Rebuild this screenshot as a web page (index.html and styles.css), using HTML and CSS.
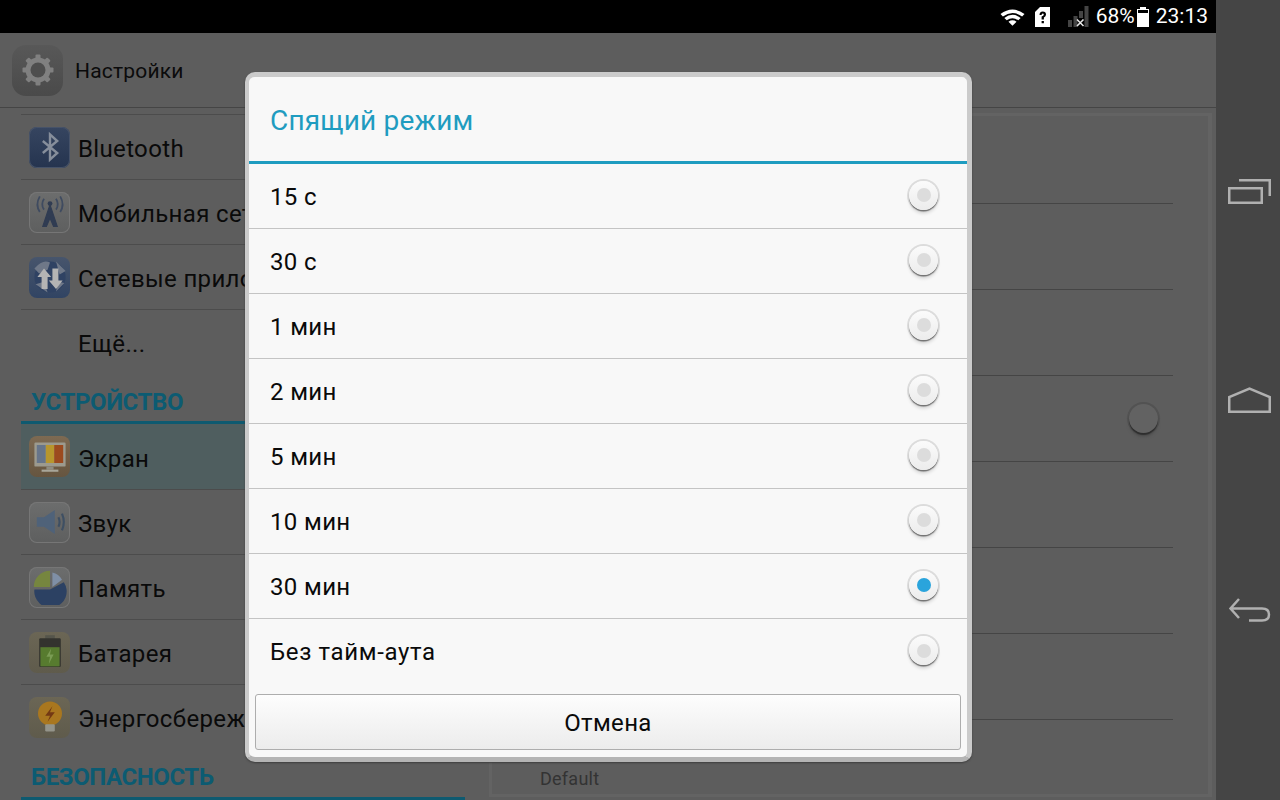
FILE: index.html
```html
<!DOCTYPE html>
<html lang="ru">
<head>
<meta charset="utf-8">
<title>Настройки</title>
<link rel="stylesheet" href="styles.css">
</head>
<body>
<div class="screen">
  <div class="app">
    <header class="status">
      <svg class="st-wifi" width="25" height="18" viewBox="0 0 26 18"><path d="M0.500 6 Q13 -3.500 25.500 6 L23 8.500 Q13 1 3 8.500Z M4.500 10 Q13 3.500 21.500 10 L19 12.500 Q13 8 7 12.500Z M8.800 14 Q13 11 17.200 14 L13 18Z" fill="#fff"/></svg>
      <svg class="st-sim" width="15" height="20" viewBox="0 0 15 20"><path d="M0 5 L5 0 H15 V20 H0Z" fill="#fff"/><path d="M4.500 8 Q4.500 4.500 7.700 4.500 Q11 4.500 11 7.500 Q11 9.500 8.900 10.500 V12.500 H6.600 V9.500 Q8.800 8.800 8.800 7.500 Q8.800 6.500 7.700 6.500 Q6.600 6.500 6.600 8Z M6.600 14 H8.900 V16.300 H6.600Z" fill="#000"/></svg>
      <svg class="st-sig" width="21" height="21" viewBox="0 0 21 21"><path d="M0 14 H4 V21 H0Z M5.500 10 H9.500 V21 H5.500Z M11 5 H15 V12 H11Z M16.500 0 H20.500 V21 H16.500Z" fill="#444"/><path d="M9 13.500 L15.500 20 M15.500 13.500 L9 20" stroke="#e8e8e8" stroke-width="1.600"/></svg>
      <span class="st-text">68%</span>
      <svg class="st-bat" width="12" height="20" viewBox="0 0 12 20"><path d="M3 0 H9 V2 H12 V20 H0 V2 H3Z" fill="#fff"/><path d="M1 3 H11 V6 H1Z" fill="#000"/></svg>
      <span class="st-text">23:13</span>
    </header>
    <div class="actionbar">
      <div class="app-icon">
        <svg width="34" height="34" viewBox="0 0 34 34"><g fill="#808080"><circle cx="17" cy="17" r="12.500"/><rect x="14.500" y="1.500" width="5" height="31" rx="1"/><rect x="14.500" y="1.500" width="5" height="31" rx="1" transform="rotate(45 17 17)"/><rect x="14.500" y="1.500" width="5" height="31" rx="1" transform="rotate(90 17 17)"/><rect x="14.500" y="1.500" width="5" height="31" rx="1" transform="rotate(135 17 17)"/></g><circle cx="17" cy="17" r="7.500" fill="#4e4e4e"/></svg>
      </div>
      <span class="app-title">Настройки</span>
    </div>
    <div class="content">
      <nav class="list">
        <div class="row">
          <span class="ico ico-blue"><svg viewBox="0 0 30 30"><path d="M9 10 L21 20 L15 25.500 V4.500 L21 10 L9 20" fill="none" stroke="#868e9b" stroke-width="2"/></svg></span>
          <span class="label">Bluetooth</span>
        </div>
        <div class="row">
          <span class="ico ico-grey"><svg viewBox="0 0 30 30"><path d="M15 9 L9 27 H12 L15 20 L18 27 H21Z M12 20 H18 M13 15 H17" fill="#303c52" stroke="#303c52" stroke-width="1"/><circle cx="15" cy="8" r="2" fill="#303c52"/><path d="M10 4 Q7 9 10 13 M6.500 2 Q2.500 9 6.500 15 M20 4 Q23 9 20 13 M23.500 2 Q27.500 9 23.500 15" fill="none" stroke="#3f4b60" stroke-width="1.500"/></svg></span>
          <span class="label">Мобильная сеть</span>
        </div>
        <div class="row">
          <span class="ico ico-globe"><svg viewBox="0 0 30 30"><circle cx="15" cy="15" r="13" fill="#2f4263"/><path d="M2 8 Q9 0 15 3 L13 9 L6 12Z M20 2 L28 10 L23 13Z M3 21 L10 19 L13 28Z M22 19 L27 20 L20 27Z" fill="#6f7888"/><path d="M10 8 L16 15 H13 V25 H8 V15 H4.500Z M20 25 L14 18 H17 V8 H22 V18 H25.500Z" fill="#b4b4b4"/></svg></span>
          <span class="label">Сетевые приложения</span>
        </div>
        <div class="row">
          <span class="ico ico-none"></span>
          <span class="label">Ещё...</span>
        </div>
        <div class="section">УСТРОЙСТВО</div>
        <div class="row active">
          <span class="ico ico-tan"><svg viewBox="0 0 30 30"><rect x="2" y="3" width="26" height="20" rx="1" fill="#9c9a8e"/><rect x="4" y="5" width="7.500" height="15" fill="#67758a"/><rect x="11.500" y="5" width="7" height="15" fill="#b8962d"/><rect x="18.500" y="5" width="7.500" height="15" fill="#9c4a1e"/><rect x="12" y="23" width="6" height="2.500" fill="#8f8c80"/><rect x="8" y="25.500" width="14" height="1.800" fill="#a8a69a"/></svg></span>
          <span class="label">Экран</span>
        </div>
        <div class="row">
          <span class="ico ico-grey"><svg viewBox="0 0 30 30"><path d="M4 11 H10 L19 5 V25 L10 19 H4Z" fill="#4f6279"/><path d="M22 11 Q24 15 22 19 M25 8 Q28 15 25 22" fill="none" stroke="#3e4f63" stroke-width="1.800"/></svg></span>
          <span class="label">Звук</span>
        </div>
        <div class="row">
          <span class="ico ico-grey"><svg viewBox="0 0 30 30"><path d="M15 15 L15 1.500 A13.500 13.500 0 0 0 1.500 15Z" fill="#76863f"/><path d="M17 3 A12 12 0 0 1 25 9 L17 15Z" fill="#7f8fa6"/><path d="M26.500 11 A13.500 13.500 0 1 1 2 17 H15 Z" fill="#2c4163"/></svg></span>
          <span class="label">Память</span>
        </div>
        <div class="row">
          <span class="ico ico-olive"><svg viewBox="0 0 30 30"><rect x="11" y="1" width="8" height="3" fill="#55554b"/><rect x="6" y="3.500" width="18" height="24" rx="1" fill="#33332e"/><rect x="7" y="11" width="16" height="16" fill="#577b2f"/><path d="M16 12 L12 19 H15 L14 25 L18 17 H15Z" fill="#7a9c54"/></svg></span>
          <span class="label">Батарея</span>
        </div>
        <div class="row">
          <span class="ico ico-olive"><svg viewBox="0 0 30 30"><circle cx="15" cy="12" r="10" fill="#a9771f"/><rect x="11" y="21" width="8" height="6" rx="1" fill="#94948a"/><path d="M17 6 L11 14 H15 L13 19 L19 11 H15Z" fill="#733914"/></svg></span>
          <span class="label">Энергосбережение</span>
        </div>
        <div class="section section-last">БЕЗОПАСНОСТЬ</div>
      </nav>
      <section class="pane">
        <div class="pane-row"></div>
        <div class="pane-row"></div>
        <div class="pane-row"></div>
        <div class="pane-row"><span class="pane-radio"></span></div>
        <div class="pane-row"></div>
        <div class="pane-row"></div>
        <div class="pane-row"></div>
        <div class="pane-foot">Default</div>
      </section>
    </div>
  </div>
  <aside class="navbar">
    <svg width="46" height="26" viewBox="0 0 46 26"><path d="M14 2.250 H44.750 V18 M4.250 10.250 H36.750 V24.750 H4.250Z" fill="none" stroke="#b0b0b0" stroke-width="2.500"/></svg>
    <svg width="46" height="28" viewBox="0 0 46 28"><path d="M4.250 25.750 V11 L24.500 2.500 L44.750 11 V25.750Z" fill="none" stroke="#b0b0b0" stroke-width="2.500"/></svg>
    <svg width="46" height="28" viewBox="0 0 46 28"><path d="M14 3 L5.500 12.500 L14 22 M5.500 12.500 H37 Q44 12.500 44 18.500 Q44 24.500 37 24.500 H24" fill="none" stroke="#b0b0b0" stroke-width="2.500"/></svg>
  </aside>

  <div class="dialog">
    <h2 class="dlg-title">Спящий режим</h2>
    <div class="opt"><span>15 с</span><i class="radio"></i></div>
    <div class="opt"><span>30 с</span><i class="radio"></i></div>
    <div class="opt"><span>1 мин</span><i class="radio"></i></div>
    <div class="opt"><span>2 мин</span><i class="radio"></i></div>
    <div class="opt"><span>5 мин</span><i class="radio"></i></div>
    <div class="opt"><span>10 мин</span><i class="radio"></i></div>
    <div class="opt"><span>30 мин</span><i class="radio on"></i></div>
    <div class="opt opt-last"><span>Без тайм-аута</span><i class="radio"></i></div>
    <div class="dlg-btn">Отмена</div>
  </div>
</div>
</body>
</html>
```
FILE: styles.css
```css
* { box-sizing: border-box; }
html, body { margin: 0; padding: 0; }
body { width: 1280px; height: 800px; overflow: hidden; background: #5d5d5d; font-family: Roboto, "Liberation Sans", sans-serif; }
.screen { position: relative; display: flex; width: 1280px; height: 800px; }
.app { width: 1216px; height: 800px; display: flex; flex-direction: column; background: #5d5d5d; overflow: hidden; }
.navbar { width: 64px; height: 800px; background: #454545; display: flex; flex-direction: column; align-items: center; padding-top: 178px; }
.navbar svg:nth-child(2) { margin-top: 182px; }
.navbar svg:nth-child(3) { margin-top: 182px; }

.status { height: 33px; background: #000; flex: none; display: flex; align-items: center; justify-content: flex-end; padding-right: 8px; color: #fff; }
.st-text { font-size: 21px; line-height: 33px; }
.st-wifi { margin-right: 10px; }
.st-sim { margin-right: 18px; }
.st-sig { margin-right: 7px; }
.st-bat { margin-left: 2px; margin-right: 7px; }

.actionbar { height: 75px; flex: none; display: flex; align-items: center; padding-left: 12px; border-bottom: 1px solid #454545; }
.app-icon { width: 51px; height: 51px; border-radius: 14px; background: linear-gradient(#585858, #4a4a4a); display: flex; align-items: center; justify-content: center; }
.app-title { margin: 2px 0 0 12px; font-size: 21px; color: #0b0b0b; letter-spacing: 0.2px; }

.content { flex: 1; display: flex; align-items: flex-start; min-height: 0; }
.list { width: 444px; margin-left: 21px; padding-top: 6px; flex: none; }
.row { height: 65px; display: flex; align-items: center; padding-left: 8px; border-top: 1px solid #4c4c4c; }
.row.active { border-top: none; background: #4f5e5f; }
.label { margin: 4px 0 0 8px; font-size: 24px; color: #0a0a0a; letter-spacing: 0.35px; white-space: nowrap; }
.ico { width: 41px; height: 41px; border-radius: 8px; flex: none; display: flex; align-items: center; justify-content: center; }
.ico svg { width: 36px; height: 36px; }
.ico-blue { background: linear-gradient(#364560, #25344f); box-shadow: inset 0 0 0 1px #465268; }
.ico-grey { background: linear-gradient(#6c6d6d, #5e5f5f); box-shadow: inset 0 0 0 1px #767676; }
.ico-globe { background: linear-gradient(#47556c, #314463); }
.ico-tan { background: linear-gradient(#7d6a52, #665540); }
.ico-olive { background: linear-gradient(#6b6655, #5f5b4c); }
.ico-none { background: none; }
.section { height: 50px; padding: 13px 0 0 10px; font-size: 24px; line-height: 30px; font-weight: 700; color: #0c5b72; letter-spacing: -0.4px; border-bottom: 3px solid #0e5a70; white-space: nowrap; }
.section-last { height: 51px; }

.pane { position: relative; margin: 5px 0 0 24px; width: 723px; height: 684px; flex: none; border: 3px solid #636363; border-right-width: 4px; padding-left: 48px; padding-right: 35px; }
.pane-row { height: 86px; border-bottom: 1px solid #454545; display: flex; align-items: center; justify-content: flex-end; padding-right: 14px; }
.pane-row:first-child { height: 88px; }
.pane-radio { width: 29px; height: 29px; margin: -1px 1px 0; border-radius: 50%; background: #626262; box-shadow: 0 2px 1px #2e2e2e, 0 0 0 2px #525252, 0 4px 3px #505050; }
.pane-foot { margin-top: 48px; font-size: 18px; line-height: 22px; color: #333; letter-spacing: 0.25px; }

.dialog { position: absolute; left: 245px; top: 72px; width: 727px; height: 690px; border-radius: 10px; background: #f8f8f8; border: 4px solid #cbcbcb; border-top-width: 5px; border-right-width: 5px; border-bottom: 5px solid #b4b4b4; box-shadow: 0 1px 2px #3e3e3e; display: flex; flex-direction: column; }
.dlg-title { margin: 0; height: 87px; flex: none; padding-left: 21px; font-size: 28px; font-weight: 400; line-height: 87px; color: #1f9cc0; border-bottom: 3px solid #1e9cc0; letter-spacing: 0.2px; }
.opt { height: 65px; flex: none; display: flex; align-items: center; justify-content: space-between; padding: 0 27px 0 21px; border-bottom: 1px solid #c4c4c4; font-size: 24px; color: #0a0a0a; letter-spacing: 0.35px; }
.opt-last { border-bottom: none; letter-spacing: 0.65px; }
.opt span { position: relative; top: 1px; }
.opt-last span { top: 0; }
.radio { display: flex; align-items: center; justify-content: center; width: 29px; height: 29px; margin: 0 2px; border-radius: 50%; background: linear-gradient(#fbfbfb, #ececec); box-shadow: 0 1.500px 1px #6f6f6f, 0 0 0 2px #dcdcdc, 0 4px 3px #dedede; position: relative; top: -1px; }
.radio::after { content: ""; width: 14px; height: 14px; border-radius: 50%; background: #dcdcdc; }
.radio.on::after { background: #2aa4dc; }
.dlg-btn { margin: 10px 6px 0 6px; height: 56px; flex: none; padding-top: 2px; border: 1px solid #adadad; border-radius: 3px; background: linear-gradient(#fdfdfd, #ececec); display: flex; align-items: center; justify-content: center; font-size: 24px; color: #0a0a0a; letter-spacing: 0.35px; }
```
